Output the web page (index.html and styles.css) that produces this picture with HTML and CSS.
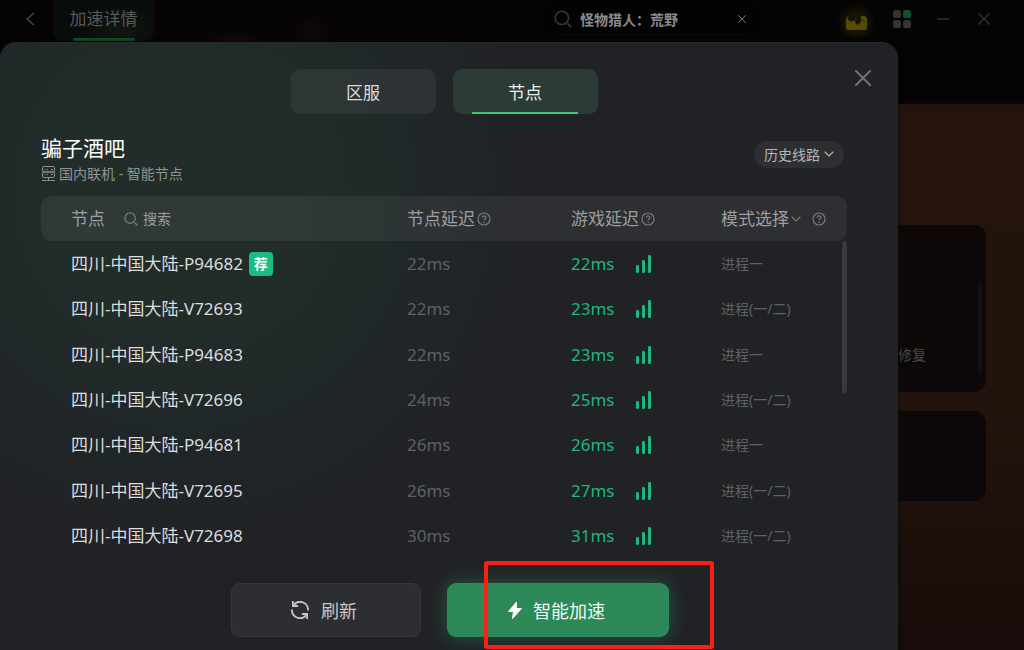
FILE: index.html
```html
<!DOCTYPE html>
<html lang="zh-CN">
<head>
    <meta charset="UTF-8">
    <title>加速详情</title>
    <link rel="stylesheet" href="styles.css">
</head>
<body>
  <!-- shared icons -->
  <svg class="sprite" aria-hidden="true">
    <symbol id="icon-search" viewBox="0 0 16 16">
      <circle cx="7" cy="7" r="5.9" fill="none" stroke="currentColor" stroke-width="1.5"/>
      <path d="M12.600 12.600l2.200 2.200" stroke="currentColor" stroke-width="1.8" stroke-linecap="round"/>
    </symbol>
    <symbol id="icon-close" viewBox="0 0 16 16">
      <path d="M1 1l14 14M15 1L1 15" stroke="currentColor" stroke-width="2" stroke-linecap="round"/>
    </symbol>
    <symbol id="icon-down" viewBox="0 0 10 6">
      <path d="M1 1l4 4 4-4" fill="none" stroke="currentColor" stroke-width="1.1" stroke-linecap="round"/>
    </symbol>
    <symbol id="icon-help" viewBox="0 0 14 14">
      <circle cx="7" cy="7" r="6" fill="none" stroke="currentColor" stroke-width="1.2"/>
      <path d="M5.2 5.700c0-2.500 3.700-2.400 3.700-.2 0 1.300-1.800 1.300-1.800 2.700" fill="none" stroke="currentColor" stroke-width="1.2"/>
      <circle cx="7.1" cy="10.2" r=".8" fill="currentColor"/>
    </symbol>
    <symbol id="icon-signal" viewBox="0 0 15 18">
      <rect x="0" y="10" width="3" height="8" rx="1.2" fill="currentColor"/>
      <rect x="6" y="5" width="3" height="13" rx="1.2" fill="currentColor"/>
      <rect x="12" y="0" width="3" height="18" rx="1.2" fill="currentColor"/>
    </symbol>
  </svg>

  <header class="topbar">
    <button class="back" aria-label="返回">
      <svg width="9" height="14" viewBox="0 0 9 14"><path d="M8 1L1 7l7 6" fill="none" stroke="currentColor" stroke-width="1.3"/></svg>
    </button>
    <a class="page-tab" href="#">加速详情</a>
    <div class="top-search">
      <svg width="18" height="18"><use href="#icon-search"/></svg>
      <input type="text" value="怪物猎人：荒野" aria-label="搜索游戏">
      <button aria-label="清空"><svg width="8" height="8"><use href="#icon-close"/></svg></button>
    </div>
    <div class="tools">
      <button class="tool-gift" aria-label="活动">
        <svg width="21" height="15" viewBox="0 0 21 15">
          <path d="M2 1C0 3 0 4 0 6v7q0 2 2 2h17q2 0 2-2V5c0-3-2-5-4-4-2 0-3 1-2 3l1 2-2 1 1 2-2-1-1 2-2-1-1-2 1-2-2 1-1-1-1 2-2-1C2 5 1 4 2 1z" fill="#564d05"/>
          <path d="M9 5l1-2 1 2zM17 4l1 2v2" fill="#564d05" stroke="#1d1902" stroke-width=".6"/>
        </svg>
      </button>
      <button aria-label="菜单">
        <svg width="18" height="18" viewBox="0 0 18 18" fill="#343434">
          <rect width="8" height="8" rx="2.6"/>
          <rect x="10" width="8" height="8" rx="2.6" fill="#10502c"/>
          <rect y="10" width="8" height="8" rx="2.6"/>
          <rect x="10" y="10" width="8" height="8" rx="2.6"/>
        </svg>
      </button>
      <button aria-label="最小化"><svg width="12" height="2"><rect width="12" height="2" fill="#272525"/></svg></button>
      <button aria-label="关闭"><svg width="12" height="12"><use href="#icon-close"/></svg></button>
    </div>
  </header>

  <div class="content">
    <main class="dialog">
      <button class="dialog-close" aria-label="关闭"><svg width="16" height="16"><use href="#icon-close"/></svg></button>

      <nav class="tabs">
        <button class="tab">区服</button>
        <button class="tab active">节点</button>
      </nav>

      <section class="game">
        <div>
          <h1>骗子酒吧</h1>
          <p>
            <svg width="15" height="16" viewBox="0 0 15 16" fill="none" stroke="currentColor">
              <rect x="1.500" y=".5" width="12" height="5.500" rx="1.2"/>
              <rect x="1.500" y="6" width="12" height="5.500" rx="1.2"/>
              <path d="M3.500 3.500h1M6 3.500h1M10 3.500h2M3.500 8.500h1M6 8.500h1M10 8.500h2M7.500 11.500v3M1 14.500h4.500M9.500 14.500H14M6 14.500h3"/>
            </svg>
            <span>国内联机 - 智能节点</span>
          </p>
        </div>
        <label class="history">
          <select aria-label="历史线路"><option>历史线路</option></select>
          <svg width="10" height="6"><use href="#icon-down"/></svg>
        </label>
      </section>

      <div class="table-wrap">
        <table class="nodes">
          <thead>
            <tr>
              <th>
                <div class="head">
                  <span>节点</span>
                  <label class="node-search">
                    <svg width="14" height="14"><use href="#icon-search"/></svg>
                    <input type="text" placeholder="搜索" aria-label="搜索节点">
                  </label>
                </div>
              </th>
              <th class="col-node"><div class="head">节点延迟<svg width="14" height="14"><use href="#icon-help"/></svg></div></th>
              <th class="col-game"><div class="head">游戏延迟<svg width="14" height="14"><use href="#icon-help"/></svg></div></th>
              <th class="col-mode">
                <div class="head">
                  <select aria-label="模式选择"><option>模式选择</option></select>
                  <svg class="down" width="10" height="6"><use href="#icon-down"/></svg>
                  <svg width="14" height="14"><use href="#icon-help"/></svg>
                </div>
              </th>
            </tr>
          </thead>
          <tbody>
            <tr>
              <td><div class="cell">四川-中国大陆-P94682<span class="badge">荐</span></div></td>
              <td class="delay">22ms</td>
              <td class="ping"><div class="cell">22ms<svg width="15" height="18"><use href="#icon-signal"/></svg></div></td>
              <td class="mode">进程一</td>
            </tr>
            <tr>
              <td>四川-中国大陆-V72693</td>
              <td class="delay">22ms</td>
              <td class="ping"><div class="cell">23ms<svg width="15" height="18"><use href="#icon-signal"/></svg></div></td>
              <td class="mode">进程(一/二)</td>
            </tr>
            <tr>
              <td>四川-中国大陆-P94683</td>
              <td class="delay">22ms</td>
              <td class="ping"><div class="cell">23ms<svg width="15" height="18"><use href="#icon-signal"/></svg></div></td>
              <td class="mode">进程一</td>
            </tr>
            <tr>
              <td>四川-中国大陆-V72696</td>
              <td class="delay">24ms</td>
              <td class="ping"><div class="cell">25ms<svg width="15" height="18"><use href="#icon-signal"/></svg></div></td>
              <td class="mode">进程(一/二)</td>
            </tr>
            <tr>
              <td>四川-中国大陆-P94681</td>
              <td class="delay">26ms</td>
              <td class="ping"><div class="cell">26ms<svg width="15" height="18"><use href="#icon-signal"/></svg></div></td>
              <td class="mode">进程一</td>
            </tr>
            <tr>
              <td>四川-中国大陆-V72695</td>
              <td class="delay">26ms</td>
              <td class="ping"><div class="cell">27ms<svg width="15" height="18"><use href="#icon-signal"/></svg></div></td>
              <td class="mode">进程(一/二)</td>
            </tr>
            <tr>
              <td>四川-中国大陆-V72698</td>
              <td class="delay">30ms</td>
              <td class="ping"><div class="cell">31ms<svg width="15" height="18"><use href="#icon-signal"/></svg></div></td>
              <td class="mode">进程(一/二)</td>
            </tr>
          </tbody>
        </table>
        <div class="scrollbar"></div>
      </div>

      <div class="actions">
        <button class="btn refresh">
          <svg width="18" height="18" viewBox="0 0 18 18" fill="none" stroke="currentColor" stroke-width="1.8">
            <path d="M3 3.600A8 8 0 0 1 17 9.500M15 14.400A8 8 0 0 1 1 8.500"/>
            <path d="M1.900 0v5h5.200M16.100 18v-5h-5.200"/>
          </svg>
          刷新
        </button>
        <div class="boost-wrap">
          <button class="btn boost">
            <svg width="16" height="20" viewBox="0 0 16 20"><path d="M9.500 2L1.500 11.500h5L5.500 18.500l9-10H9.300z" fill="#fff" stroke="#fff" stroke-linejoin="round"/></svg>
            智能加速
          </button>
          <div class="mark"></div>
        </div>
      </div>
    </main>

    <aside class="side">
      <div class="side-card tall">
        <span>修复</span>
        <i class="side-bar"></i>
      </div>
      <div class="side-card"></div>
    </aside>
  </div>
</body>
</html>
```
FILE: styles.css
```css
* {
  box-sizing: border-box;
}

body {
  margin: 0;
  min-height: 100vh;
  display: flex;
  flex-direction: column;
  font-family: "Noto Sans", "Noto Sans CJK SC", sans-serif;
  font-size: 17px;
  color: #dcdddd;
  background: linear-gradient(#050304 0, #060304 103px, #25140d 105px, #22130d 420px, #1c0e0a 560px, #180b09 100%);
}

button,
input,
select {
  font: inherit;
  color: inherit;
  background: none;
  border: 0;
  padding: 0;
  outline: none;
}

button,
select {
  cursor: pointer;
}

select {
  appearance: none;
}

svg {
  flex: none;
}

.sprite {
  display: none;
}

/* top bar */
.topbar {
  display: flex;
  align-items: flex-start;
  height: 42px;
  padding-right: 20px;
  background:
    radial-gradient(ellipse 40px 14px at 235px 42px, #150a07, transparent),
    radial-gradient(ellipse 40px 30px at 120px 30px, #14100a, transparent),
    radial-gradient(ellipse 24px 24px at 310px 34px, #100809, transparent),
    #050304;
}

.back {
  width: 53px;
  height: 37px;
  padding-left: 8px;
  color: #4d4b4b;
}

.back svg {
  display: block;
  margin: 0 auto;
}

.page-tab {
  display: flex;
  justify-content: center;
  width: 101px;
  height: 41px;
  padding-top: 6px;
  line-height: 25px;
  color: #575a58;
  text-decoration: none;
  border-radius: 0 0 9px 9px;
  background: rgba(18, 36, 29, 0.3);
}

.page-tab::after {
  content: "";
  position: absolute;
  top: 38px;
  width: 62px;
  height: 3px;
  border-radius: 2px;
  background: #164d2d;
}

.top-search {
  display: flex;
  align-items: center;
  width: 224px;
  height: 40px;
  margin-left: auto;
  margin-right: 69px;
  padding: 0 16px 2px 14px;
  border: 1px solid #0b0a0a;
  border-top: 0;
  border-radius: 20px;
  background: #030303;
  color: #353535;
}

.top-search input {
  flex: 1;
  min-width: 0;
  margin-left: 8px;
  font-size: 14px;
  font-weight: bold;
  color: #8b8b8b;
}

.top-search button {
  display: flex;
  color: #777;
}

.tools {
  display: flex;
}

.tools button {
  display: flex;
  align-items: center;
  justify-content: center;
  width: 41px;
  height: 38px;
  color: #302e2e;
}

.tools .tool-gift {
  width: 49px;
  padding-top: 6px;
  background: radial-gradient(circle at 50% 60%, #151302 10px, transparent 20px);
}

/* main area */
.content {
  flex: 1;
  display: flex;
}

.dialog {
  position: relative;
  flex: 1;
  padding: 27px 51px 13px 41px;
  border-radius: 16px 16px 0 0;
  background:
    radial-gradient(circle at 180px 150px, #222d2a 0, #222d2a 110px, #202628 260px, rgba(33, 34, 38, 0) 350px),
    #212226;
  box-shadow: inset 0 1px #25292b, 0 0 4px #0a0807;
}

.dialog-close {
  position: absolute;
  top: 28px;
  right: 27px;
  display: flex;
  color: #717276;
}

.tabs {
  display: flex;
  justify-content: center;
  gap: 17px;
}

.tab {
  width: 145px;
  height: 45px;
  border-radius: 9px;
  background: rgba(255, 255, 255, 0.06);
}

.tab.active {
  background: linear-gradient(#3bc973, #3bc973) center bottom / 106px 2px no-repeat, #2b3c37;
  color: #eee;
}

.game {
  display: flex;
  justify-content: space-between;
  align-items: center;
  height: 54px;
  margin: 18px 3px 10px 0;
}

.game h1 {
  margin: 0;
  font-size: 21px;
  line-height: 30px;
  font-weight: normal;
  color: #fff;
}

.game p {
  display: flex;
  align-items: center;
  gap: 3px;
  margin: 0;
  font-size: 14px;
  line-height: 22px;
  color: #8f9593;
}

.history {
  display: flex;
  align-items: center;
  justify-content: center;
  gap: 4px;
  width: 90px;
  height: 27px;
  margin-bottom: 10px;
  border-radius: 14px;
  background: #2e2f33;
  font-size: 14px;
  color: #b5b6b8;
}

/* node list */
.table-wrap {
  position: relative;
}

.nodes {
  width: 100%;
  height: 363px;
  border-spacing: 0;
  table-layout: fixed;
}

.nodes th,
.nodes td {
  padding: 0;
  text-align: left;
  line-height: 24px;
  font-weight: normal;
  white-space: nowrap;
}

.nodes td {
  height: 45px;
}

.nodes th {
  height: 45px;
  background: rgba(255, 255, 255, 0.06);
  color: #9c9e9f;
}

.nodes th:first-child,
.nodes td:first-child {
  padding-left: 30px;
}

.nodes th:first-child {
  border-radius: 10px 0 0 10px;
}

.nodes th:last-child {
  border-radius: 0 10px 10px 0;
}

.col-node {
  width: 164px;
}

.col-game {
  width: 150px;
}

.col-mode {
  width: 126px;
}

.head,
.cell {
  display: flex;
  align-items: center;
}

.head {
  gap: 2px;
}

.head svg {
  color: #77797b;
}

.head .down {
  margin-right: 9px;
}

.node-search {
  display: flex;
  align-items: center;
  gap: 5px;
  margin-left: 17px;
  font-size: 14px;
}

.node-search input {
  width: 120px;
}

.node-search input::placeholder {
  color: #9c9e9f;
}

.badge {
  width: 24px;
  height: 24px;
  margin-left: 6px;
  border-radius: 4px;
  background: #1abc82;
  color: #fff;
  font-size: 14px;
  font-weight: bold;
  line-height: 24px;
  text-align: center;
}

.nodes .delay {
  color: #5f6063;
}

.nodes .ping {
  color: #1db77e;
}

.ping svg {
  margin-left: 21px;
}

.nodes .mode {
  font-size: 14px;
  color: #5f6063;
}

.scrollbar {
  position: absolute;
  top: 45px;
  right: 0;
  width: 5px;
  height: 152px;
  border-radius: 3px;
  background: #38393d;
}

/* bottom buttons */
.actions {
  display: flex;
  justify-content: center;
  gap: 26px;
  margin-top: 24px;
  padding-left: 12px;
}

.btn {
  display: flex;
  align-items: center;
  justify-content: center;
  height: 54px;
  padding-right: 4px;
  border-radius: 9px;
  font-size: 18px;
}

.refresh {
  gap: 12px;
  width: 190px;
  border: 1px solid #37383b;
  background: #2d2e31;
  color: #c6c7c8;
}

.boost-wrap {
  position: relative;
}

.boost {
  gap: 10px;
  width: 222px;
  background: #2d8a58;
  color: #f1f8f4;
  box-shadow: 0 0 18px rgba(45, 138, 88, 0.55);
}

.mark {
  position: absolute;
  top: -22px;
  left: 37px;
  width: 230px;
  height: 88px;
  border: 4px solid #fb1f14;
  border-radius: 3px;
  pointer-events: none;
}

/* page behind the dialog */
.side {
  display: flex;
  flex-direction: column;
  gap: 19px;
  width: 126px;
  padding: 183px 38px 0 0;
}

.side-card {
  height: 90px;
  border-radius: 0 12px 12px 0;
  background: #0d0807;
}

.side-card.tall {
  display: flex;
  justify-content: space-between;
  height: 167px;
  padding: 56px 4px 17px 0;
  font-size: 14px;
  line-height: 20px;
  color: #4a4846;
}

.tall span {
  align-self: flex-end;
  margin-bottom: 10px;
}

.side-bar {
  width: 4px;
  border-radius: 2px;
  background: #13100e;
}
```
